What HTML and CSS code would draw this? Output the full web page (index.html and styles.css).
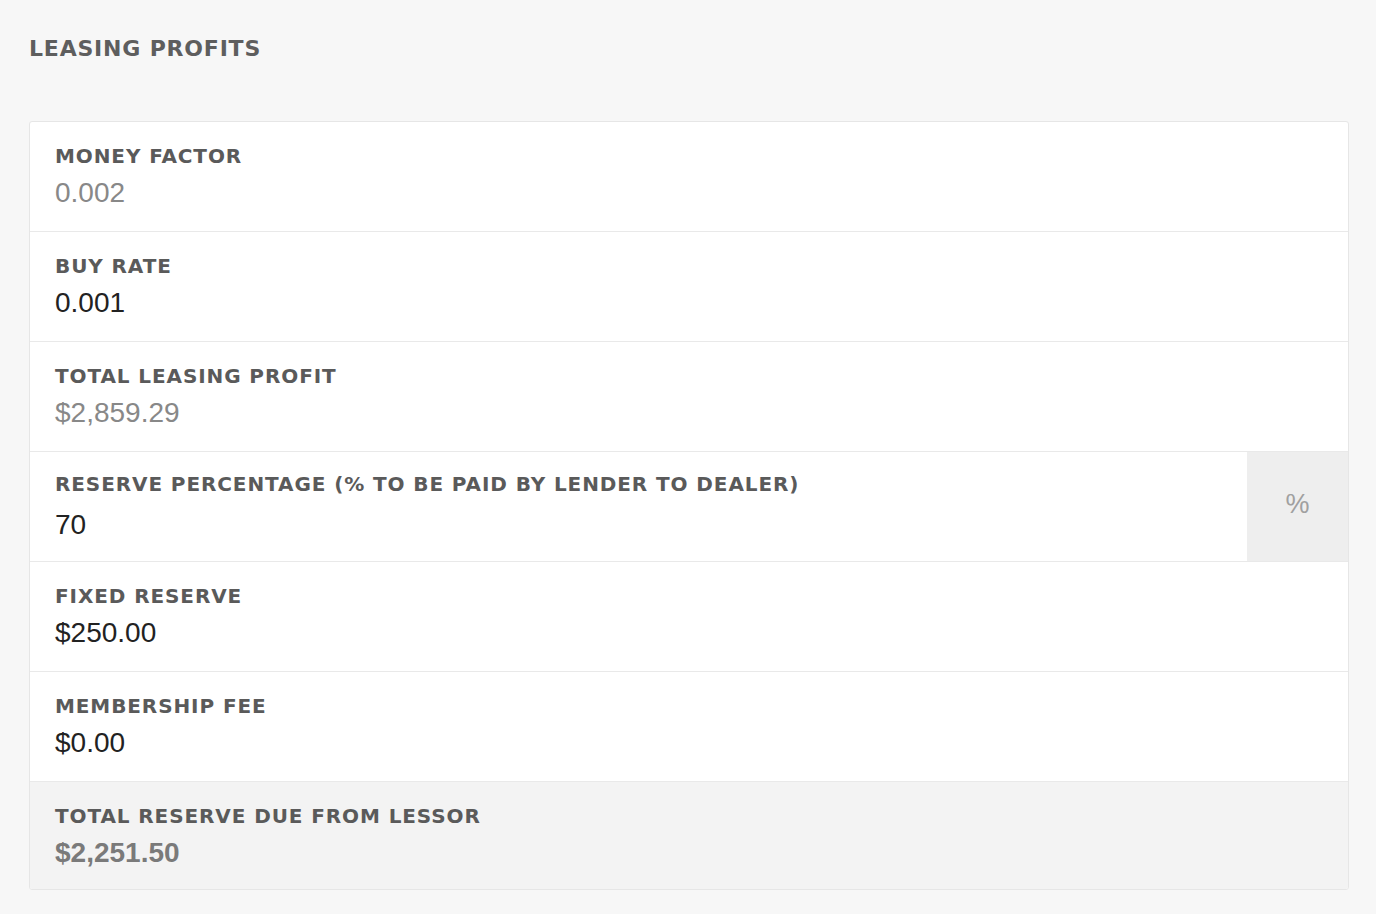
FILE: index.html
```html
<!DOCTYPE html>
<html>
<head>
<meta charset="utf-8">
<link rel="stylesheet" href="styles.css">
</head>
<body>
<div class="page">
  <h2 class="title">LEASING PROFITS</h2>
  <div class="card">
    <div class="row">
      <div class="field">
        <div class="label">MONEY FACTOR</div>
        <div class="value muted">0.002</div>
      </div>
    </div>
    <div class="row">
      <div class="field">
        <div class="label">BUY RATE</div>
        <div class="value">0.001</div>
      </div>
    </div>
    <div class="row">
      <div class="field">
        <div class="label">TOTAL LEASING PROFIT</div>
        <div class="value muted">$2,859.29</div>
      </div>
    </div>
    <div class="row">
      <div class="field field-input">
        <div class="label">RESERVE PERCENTAGE (% TO BE PAID BY LENDER TO DEALER)</div>
        <div class="value input">70</div>
      </div>
      <div class="addon">%</div>
    </div>
    <div class="row">
      <div class="field">
        <div class="label">FIXED RESERVE</div>
        <div class="value">$250.00</div>
      </div>
    </div>
    <div class="row">
      <div class="field">
        <div class="label">MEMBERSHIP FEE</div>
        <div class="value">$0.00</div>
      </div>
    </div>
    <div class="row total">
      <div class="field">
        <div class="label">TOTAL RESERVE DUE FROM LESSOR</div>
        <div class="value strong">$2,251.50</div>
      </div>
    </div>
  </div>
</div>
</body>
</html>
```

FILE: styles.css
```css
html, body {
  margin: 0;
  padding: 0;
  background: #f7f7f7;
}
.page {
  padding: 34px 27px 24px 29px;
}
.title {
  margin: 0 0 57px 0;
  font-family: "DejaVu Sans", "Liberation Sans", sans-serif;
  font-weight: 700;
  font-size: 22px;
  line-height: 30px;
  letter-spacing: 0.8px;
  color: #5e5e5e;
}
.card {
  background: #fff;
  border: 1px solid #e6e6e6;
  border-radius: 3px;
  overflow: hidden;
}
.row {
  display: flex;
  height: 109px;
  border-top: 1px solid #e9e9e9;
}
.row:first-child {
  border-top: none;
}
.field {
  flex: 1;
  padding: 22px 25px 0 25px;
}
.field-input {
  padding-top: 20px;
}
.label {
  font-family: "DejaVu Sans", "Liberation Sans", sans-serif;
  font-weight: 700;
  font-size: 20px;
  line-height: 24px;
  letter-spacing: 0.9px;
  color: #5a5a5a;
}
.value {
  margin-top: 9px;
  font-family: "Liberation Sans", Arial, sans-serif;
  font-size: 28px;
  line-height: 32px;
  color: #222;
}
.value.muted {
  color: #888;
}
.value.input {
  margin-top: 13px;
}
.value.strong {
  font-weight: 700;
  color: #7a7a7a;
}
.addon {
  width: 101px;
  background: #eeeeee;
  display: flex;
  align-items: center;
  justify-content: center;
  font-family: "Liberation Sans", Arial, sans-serif;
  font-size: 27px;
  color: #a0a0a0;
  padding-bottom: 4px;
  box-sizing: border-box;
}
.row.total {
  height: 107px;
  background: #f3f3f3;
}
```
